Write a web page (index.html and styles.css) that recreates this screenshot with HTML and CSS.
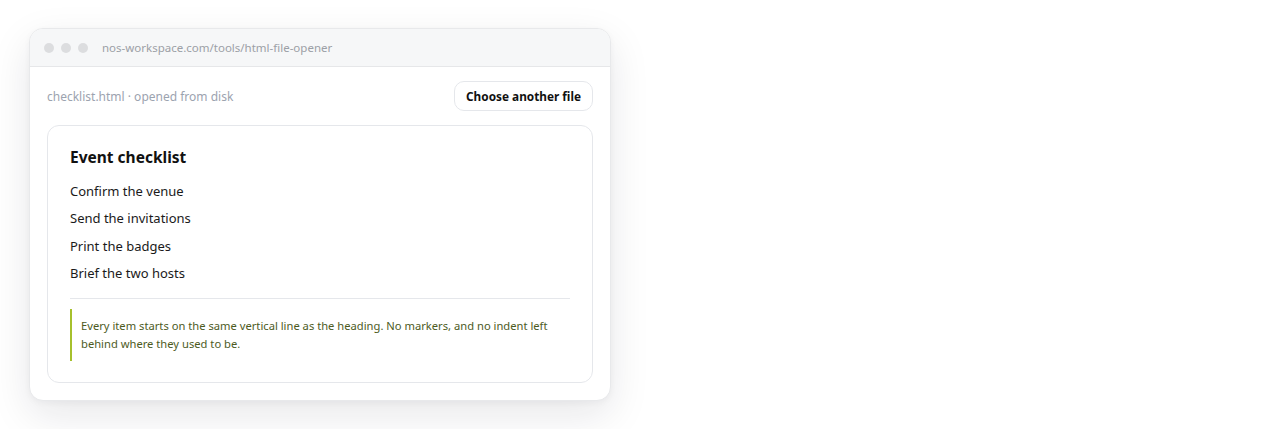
FILE: index.html
```html
<!DOCTYPE html>
<html lang="en">
<head>
    <meta charset="UTF-8">
    <meta name="viewport" content="width=device-width, initial-scale=1.0">
    <title>HTML File Opener</title>
    <link rel="stylesheet" href="styles.css">
</head>
<body>
    <div class="window">
        <div class="titlebar">
            <div class="dots">
                <span class="dot"></span>
                <span class="dot"></span>
                <span class="dot"></span>
            </div>
            <span class="url">nos-workspace.com/tools/html-file-opener</span>
        </div>

        <div class="body">
            <div class="toolbar">
                <span class="file-info">checklist.html · opened from disk</span>
                <button class="btn">Choose another file</button>
            </div>

            <div class="doc">
                <h2>Event checklist</h2>
                <ul class="checklist">
                    <li>Confirm the venue</li>
                    <li>Send the invitations</li>
                    <li>Print the badges</li>
                    <li>Brief the two hosts</li>
                </ul>
                <hr>
                <p class="note">Every item starts on the same vertical line as the heading. No markers, and no indent left behind where they used to be.</p>
            </div>
        </div>
    </div>
</body>
</html>
```

FILE: styles.css
```css
body {
    margin: 0;
    padding: 28px 29px;
    background: #ffffff;
    font-family: "Noto Sans", "Open Sans", sans-serif;
    color: #111827;
}

.window {
    width: 582px;
    border: 1px solid #e8e9eb;
    border-radius: 14px;
    background: #ffffff;
    overflow: hidden;
    box-shadow: 0 14px 40px rgba(15, 23, 42, 0.10), 0 2px 6px rgba(15, 23, 42, 0.04);
    box-sizing: border-box;
}

.titlebar {
    height: 38px;
    display: flex;
    align-items: center;
    padding: 0 14px;
    background: #f6f7f8;
    border-bottom: 1px solid #e6e7e9;
    box-sizing: border-box;
}

.dots {
    display: flex;
    gap: 7px;
    margin-right: 14px;
}

.dot {
    width: 10px;
    height: 10px;
    border-radius: 50%;
    background: #dcdddf;
}

.url {
    font-size: 11.5px;
    color: #9ca0a6;
}

.body {
    padding: 14px 17px 17px 17px;
}

.toolbar {
    display: flex;
    align-items: center;
    justify-content: space-between;
    margin-bottom: 14px;
}

.file-info {
    font-size: 12px;
    color: #9ca3af;
}

.btn {
    height: 30px;
    padding: 0 11px;
    border: 1px solid #e5e7eb;
    border-radius: 10px;
    background: #ffffff;
    font-family: inherit;
    font-size: 11.8px;
    font-weight: bold;
    color: #111111;
}

.doc {
    border: 1px solid #e5e7eb;
    border-radius: 12px;
    padding: 20px 22px 21px 22px;
}

.doc h2 {
    margin: 0 0 10px 0;
    font-size: 15.5px;
    font-weight: bold;
    color: #111111;
}

.checklist {
    list-style: none;
    margin: 0;
    padding: 0;
}

.checklist li {
    font-size: 13px;
    line-height: 27.4px;
    color: #1a1a1a;
}

.doc hr {
    border: 0;
    border-top: 1px solid #e5e7eb;
    margin: 10px 0 10px 0;
}

.note {
    margin: 0;
    padding: 8px 0 8px 9px;
    border-left: 2px solid #a6c02c;
    font-size: 11.2px;
    line-height: 18px;
    color: #4d5b1e;
}
```
